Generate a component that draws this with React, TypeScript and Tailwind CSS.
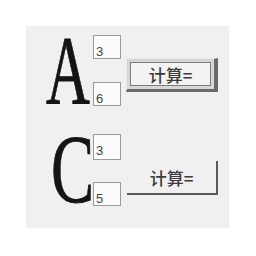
export default function App() {
  const box = "w-[28px] h-[24px] border border-[#9a9a9a] bg-[#fbfbfb] text-[13px] leading-none text-[#444] pl-[2px] pt-[9px] font-['Liberation_Sans',sans-serif]";
  const letter = "h-[70px] text-[98px] leading-[70px] text-[#141414] font-['Liberation_Serif',serif] [-webkit-text-stroke:0.8px_#141414]";
  const label = "text-[17px] leading-none text-[#3c3c3c] font-['Noto_Sans_CJK_SC',sans-serif] font-medium";

  return (
    <div className="w-[256px] h-[256px] bg-white pt-[26px] pl-[26px]">
      <div className="w-[203px] h-[202px] bg-[#f0f0f0] pt-[9px] flex flex-col">
        {/* row A */}
        <div className="flex items-start">
          <div className={letter + " ml-[20px] w-[44px]"}>
            <span className="inline-block scale-x-[0.62] origin-left">A</span>
          </div>
          <div className="ml-[3px] flex flex-col">
            <div className={box}>3</div>
            <div className={box + " mt-[23px]"}>6</div>
          </div>
          <div className="ml-[5px] mt-[23px] w-[92px] h-[34px] bg-[#d6d6d6] border-t border-l border-[#e9e9e9] border-r-[4px] border-b-[3px] border-r-[#6a6a6a] border-b-[#6a6a6a] p-[3px]">
            <div className="w-full h-full border border-[#7c7c7c] bg-[#f3f3f3] flex items-center justify-center">
              <span className={label}>计算=</span>
            </div>
          </div>
        </div>

        {/* row C */}
        <div className="flex items-start mt-[28px]">
          <div className={letter + " ml-[25px] w-[40px]"}>
            <span className="inline-block scale-x-[0.66] origin-left">C</span>
          </div>
          <div className="ml-[2px] flex flex-col">
            <div className={box + " h-[26px]"}>3</div>
            <div className={box + " mt-[22px]"}>5</div>
          </div>
          <div className="ml-[6px] mt-[27px] w-[91px] h-[34px] border-b-2 border-r-2 border-[#5a5a5a] flex items-center justify-center">
            <span className={label}>计算=</span>
          </div>
        </div>
      </div>
    </div>
  );
}
